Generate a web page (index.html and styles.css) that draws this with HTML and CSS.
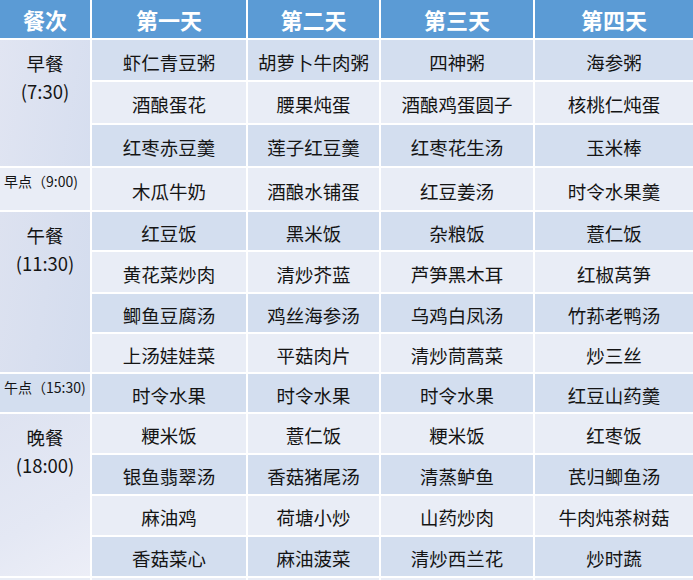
FILE: index.html
```html
<!DOCTYPE html>
<html lang="zh">
<head>
<meta charset="utf-8">
<title>菜单</title>
<link rel="stylesheet" href="styles.css">
</head>
<body>
<div class="menu">
  <div class="hd">餐次</div>
  <div class="hd">第一天</div>
  <div class="hd">第二天</div>
  <div class="hd">第三天</div>
  <div class="hd">第四天</div>

  <div class="meal meal-1">早餐<br>(7:30)</div>
  <div class="c dark">虾仁青豆粥</div><div class="c dark">胡萝卜牛肉粥</div><div class="c dark">四神粥</div><div class="c dark">海参粥</div>
  <div class="c light">酒酿蛋花</div><div class="c light">腰果炖蛋</div><div class="c light">酒酿鸡蛋圆子</div><div class="c light">核桃仁炖蛋</div>
  <div class="c dark">红枣赤豆羹</div><div class="c dark">莲子红豆羹</div><div class="c dark">红枣花生汤</div><div class="c dark">玉米棒</div>

  <div class="snack light">早点（9:00)</div>
  <div class="c light">木瓜牛奶</div><div class="c light">酒酿水铺蛋</div><div class="c light">红豆姜汤</div><div class="c light">时令水果羹</div>

  <div class="meal meal-2">午餐<br>(11:30)</div>
  <div class="c dark">红豆饭</div><div class="c dark">黑米饭</div><div class="c dark">杂粮饭</div><div class="c dark">薏仁饭</div>
  <div class="c light">黄花菜炒肉</div><div class="c light">清炒芥蓝</div><div class="c light">芦笋黑木耳</div><div class="c light">红椒莴笋</div>
  <div class="c dark">鲫鱼豆腐汤</div><div class="c dark">鸡丝海参汤</div><div class="c dark">乌鸡白凤汤</div><div class="c dark">竹荪老鸭汤</div>
  <div class="c light">上汤娃娃菜</div><div class="c light">平菇肉片</div><div class="c light">清炒茼蒿菜</div><div class="c light">炒三丝</div>

  <div class="snack dark">午点（15:30)</div>
  <div class="c dark">时令水果</div><div class="c dark">时令水果</div><div class="c dark">时令水果</div><div class="c dark">红豆山药羹</div>

  <div class="meal meal-3">晚餐<br>(18:00)</div>
  <div class="c light">粳米饭</div><div class="c light">薏仁饭</div><div class="c light">粳米饭</div><div class="c light">红枣饭</div>
  <div class="c dark">银鱼翡翠汤</div><div class="c dark">香菇猪尾汤</div><div class="c dark">清蒸鲈鱼</div><div class="c dark">芪归鲫鱼汤</div>
  <div class="c light">麻油鸡</div><div class="c light">荷塘小炒</div><div class="c light">山药炒肉</div><div class="c light">牛肉炖茶树菇</div>
  <div class="c dark">香菇菜心</div><div class="c dark">麻油菠菜</div><div class="c dark">清炒西兰花</div><div class="c dark">炒时蔬</div>

  <div class="c light"></div><div class="c light"></div><div class="c light"></div><div class="c light"></div><div class="c light"></div>
</div>
</body>
</html>
```

FILE: styles.css
```css
html, body {
  margin: 0;
  padding: 0;
  background: #ffffff;
  overflow: hidden;
}

.menu {
  display: grid;
  grid-template-columns: 90px 154px 131px 152px 158px;
  grid-template-rows: 38px 40px 41px 41px 42px 38px 40px 38px 38px 38px 39px 39px 39px 39px 30px;
  gap: 2px;
  width: 693px;
  background: #ffffff;
  font-family: "Noto Sans CJK SC", "Noto Sans", sans-serif;
  color: #141414;
}

.hd {
  background: #5b9bd5;
  color: #ffffff;
  font-weight: 700;
  font-size: 22px;
  display: flex;
  align-items: center;
  justify-content: center;
}

.c {
  display: flex;
  align-items: center;
  justify-content: center;
  font-size: 18.5px;
  padding-top: 3px;
  box-sizing: border-box;
  white-space: nowrap;
}

.dark {
  background: #d3deef;
}

.light {
  background: #e9edf6;
}

.meal {
  text-align: center;
  font-size: 18.5px;
  line-height: 28px;
  padding-top: 9px;
  box-sizing: border-box;
}

.meal-1 {
  grid-row: span 3;
  background: linear-gradient(100deg, #e1e5f2 0%, #d6deef 100%);
}

.meal-2 {
  grid-row: span 4;
  background: linear-gradient(100deg, #dde2f0 0%, #d3dcee 100%);
}

.meal-3 {
  grid-row: span 4;
  background: linear-gradient(150deg, #dee3f1 0%, #e4e8f4 60%, #eceef7 100%);
}

.snack {
  font-size: 14px;
  padding: 3px 0 0 4px;
  white-space: nowrap;
  box-sizing: border-box;
}
```
